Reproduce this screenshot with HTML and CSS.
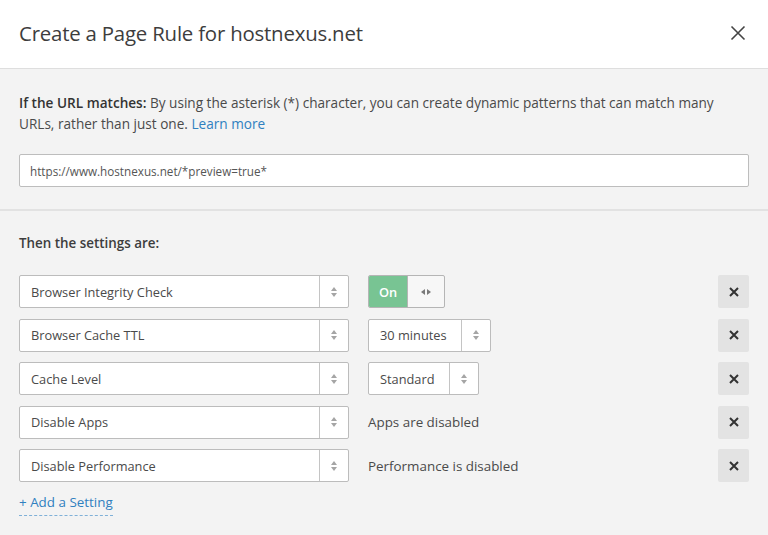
FILE: index.html
```html
<!DOCTYPE html>
<html>
<head>
<meta charset="utf-8">
<link rel="stylesheet" href="styles.css">
</head>
<body>
<div class="modal">
  <header class="head">
    <h1 class="title">Create a Page Rule for hostnexus.net</h1>
    <svg class="close" width="16" height="16" viewBox="0 0 16 16"><path d="M1.5 1.5 L14.5 14.5 M14.5 1.5 L1.5 14.5" stroke="#444" stroke-width="1.6" fill="none"/></svg>
  </header>
  <section class="match">
    <p class="desc"><strong>If the URL matches:</strong> By using the asterisk (*) character, you can create dynamic patterns that can match many<br>URLs, rather than just one. <a class="link" href="#">Learn more</a></p>
    <div class="url">https://www.hostnexus.net/*preview=true*</div>
  </section>
  <section class="settings">
    <h2 class="label">Then the settings are:</h2>
    <div class="rows">
      <div class="row">
        <div class="select wide"><span class="sel-text">Browser Integrity Check</span><span class="arrows"><i class="up"></i><i class="down"></i></span></div>
        <div class="value">
          <div class="toggle"><span class="on">On</span><span class="lr"><i class="left"></i><i class="right"></i></span></div>
        </div>
        <button class="remove"><svg width="10" height="10" viewBox="0 0 10 10"><path d="M1 1 L9 9 M9 1 L1 9" stroke="#333" stroke-width="2"/></svg></button>
      </div>
      <div class="row">
        <div class="select wide"><span class="sel-text">Browser Cache TTL</span><span class="arrows"><i class="up"></i><i class="down"></i></span></div>
        <div class="value">
          <div class="select ttl"><span class="sel-text">30 minutes</span><span class="arrows"><i class="up"></i><i class="down"></i></span></div>
        </div>
        <button class="remove"><svg width="10" height="10" viewBox="0 0 10 10"><path d="M1 1 L9 9 M9 1 L1 9" stroke="#333" stroke-width="2"/></svg></button>
      </div>
      <div class="row">
        <div class="select wide"><span class="sel-text">Cache Level</span><span class="arrows"><i class="up"></i><i class="down"></i></span></div>
        <div class="value">
          <div class="select level"><span class="sel-text">Standard</span><span class="arrows"><i class="up"></i><i class="down"></i></span></div>
        </div>
        <button class="remove"><svg width="10" height="10" viewBox="0 0 10 10"><path d="M1 1 L9 9 M9 1 L1 9" stroke="#333" stroke-width="2"/></svg></button>
      </div>
      <div class="row">
        <div class="select wide"><span class="sel-text">Disable Apps</span><span class="arrows"><i class="up"></i><i class="down"></i></span></div>
        <div class="value"><span class="static">Apps are disabled</span></div>
        <button class="remove"><svg width="10" height="10" viewBox="0 0 10 10"><path d="M1 1 L9 9 M9 1 L1 9" stroke="#333" stroke-width="2"/></svg></button>
      </div>
      <div class="row">
        <div class="select wide"><span class="sel-text">Disable Performance</span><span class="arrows"><i class="up"></i><i class="down"></i></span></div>
        <div class="value"><span class="static">Performance is disabled</span></div>
        <button class="remove"><svg width="10" height="10" viewBox="0 0 10 10"><path d="M1 1 L9 9 M9 1 L1 9" stroke="#333" stroke-width="2"/></svg></button>
      </div>
    </div>
    <a class="add" href="#">+ Add a Setting</a>
  </section>
</div>
</body>
</html>
```
FILE: styles.css
```css
* { box-sizing: border-box; }
html, body { margin: 0; padding: 0; }
body {
  background: #f3f3f3;
  font-family: "Open Sans", "Noto Sans", sans-serif;
  color: #444;
  font-size: 13px;
  width: 768px;
  height: 535px;
  overflow: hidden;
}
.modal { display: flex; flex-direction: column; }
.head {
  background: #fff;
  height: 69px;
  border-bottom: 1px solid #dedede;
  display: flex;
  align-items: center;
  justify-content: space-between;
  padding: 0 22px 0 19px;
}
.title {
  margin: 0;
  font-size: 20.4px;
  font-weight: 400;
  color: #3d3d3d;
  letter-spacing: -0.2px;
  padding-bottom: 2px;
}
.close { display: block; margin-bottom: 2px; }
.match {
  padding: 23px 19px 22px 19px;
  border-bottom: 2px solid #e2e2e2;
}
.desc {
  margin: 0;
  font-size: 13.6px;
  line-height: 21px;
  white-space: nowrap;
  color: #4a4a4a;
}
.desc strong { font-weight: 600; color: #333; }
.link { color: #2f80c0; text-decoration: none; }
.url {
  margin-top: 20px;
  height: 33px;
  background: #fff;
  border: 1px solid #bdbdbd;
  border-radius: 2px;
  display: flex;
  align-items: center;
  padding: 0 10px;
  font-size: 11.7px;
  color: #555;
}
.settings { padding: 22px 19px 0 19px; }
.label {
  margin: 0 0 21px 0;
  font-size: 13.4px;
  line-height: 21px;
  font-weight: 600;
  color: #3d3d3d;
}
.rows { display: flex; flex-direction: column; gap: 10px; }
.row {
  display: flex;
  align-items: center;
  height: 33.5px;
}
.select {
  height: 33px;
  background: #fff;
  border: 1px solid #bcbcbc;
  border-radius: 2px;
  display: flex;
  align-items: stretch;
}
.wide { width: 330px; }
.ttl { width: 123px; }
.level { width: 111px; }
.sel-text {
  flex: 1;
  display: flex;
  align-items: center;
  padding-left: 11px;
  font-size: 12.8px;
  color: #4a4a4a;
  white-space: nowrap;
}
.arrows {
  width: 29px;
  border-left: 1px solid #c4c4c4;
  display: flex;
  flex-direction: column;
  align-items: center;
  justify-content: center;
  gap: 2px;
}
.up, .down { width: 0; height: 0; border-left: 3.5px solid transparent; border-right: 3.5px solid transparent; }
.up { border-bottom: 4px solid #a5a5a5; }
.down { border-top: 4px solid #a5a5a5; }
.value {
  margin-left: 19px;
  flex: 1;
  display: flex;
  align-items: center;
}
.static { font-size: 13.4px; color: #4a4a4a; }
.toggle {
  width: 77px;
  height: 33px;
  border: 1px solid #b5b5b5;
  border-radius: 2px;
  display: flex;
  overflow: hidden;
  background: #f7f7f7;
}
.on {
  width: 39px;
  background: #78c493;
  color: #fff;
  font-weight: 600;
  font-size: 12.8px;
  display: flex;
  align-items: center;
  justify-content: center;
  border-right: 1px solid #b5b5b5;
}
.lr {
  flex: 1;
  display: flex;
  align-items: center;
  justify-content: center;
  gap: 2px;
}
.left, .right { width: 0; height: 0; border-top: 3.5px solid transparent; border-bottom: 3.5px solid transparent; }
.left { border-right: 4px solid #7a7a7a; }
.right { border-left: 4px solid #7a7a7a; }
.remove {
  width: 31px;
  height: 33px;
  background: #e3e3e3;
  border: none;
  border-radius: 2px;
  padding: 0;
  display: flex;
  align-items: center;
  justify-content: center;
}
.add {
  display: inline-block;
  margin-top: 10px;
  color: #2f80c0;
  text-decoration: none;
  font-size: 13.4px;
  line-height: 18px;
  border-bottom: 1px dashed #7fb0d8;
  padding-bottom: 4px;
}
```
